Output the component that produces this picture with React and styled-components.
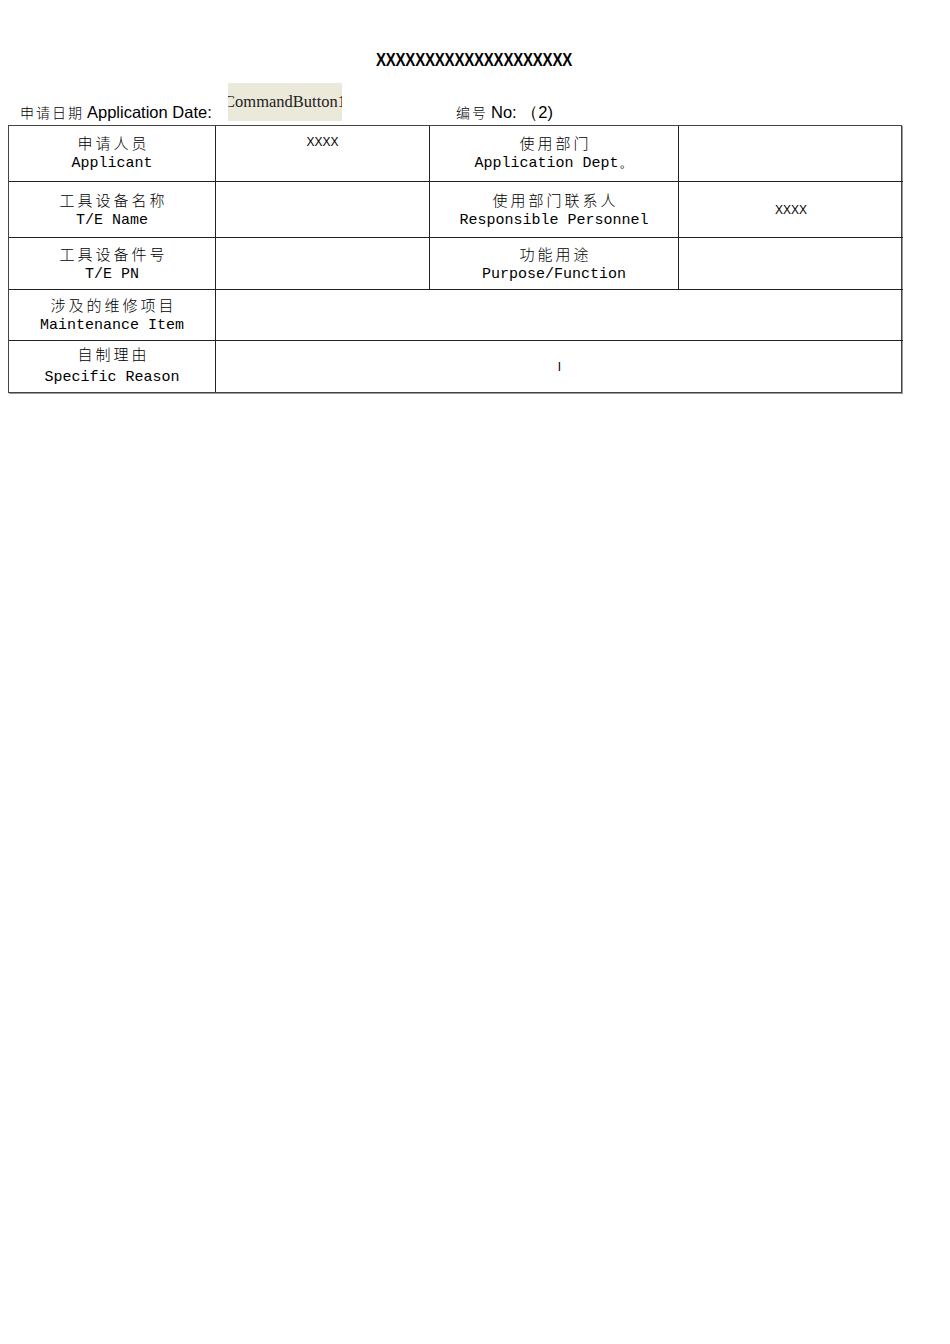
import React from "react";
import styled, { createGlobalStyle } from "styled-components";

const Global = createGlobalStyle`
  html, body { margin: 0; padding: 0; background: #fff; }
  body { font-family: "Liberation Sans", Arial, sans-serif; color: #000; }
`;

const Page = styled.div`
  width: 950px;
  min-height: 1344px;
  padding: 50px 0 0 8px;
  box-sizing: border-box;
`;

const Title = styled.h1`
  margin: 0;
  width: 932px;
  text-align: center;
  font-family: "Liberation Sans", Arial, sans-serif;
  font-weight: bold;
  font-size: 15px;
  line-height: 20px;
  letter-spacing: -0.2px;
`;

const TitleText = styled.span`
  display: inline-block;
  transform: scaleY(1.22);
`;

const HeaderRow = styled.div`
  display: flex;
  align-items: flex-end;
  height: 38px;
  margin-top: 13px;
  padding-left: 12px;
  margin-bottom: 4px;
`;

const Label = styled.span`
  font-size: 16.5px;
  line-height: 18px;
  white-space: nowrap;
  width: ${(p) => (p.$w ? `${p.$w}px` : "auto")};
  margin-left: ${(p) => p.$gap || 0}px;
`;

const Cjk = styled.span`
  font-family: "Noto Sans CJK SC", sans-serif;
  font-size: 14px;
  letter-spacing: 2px;
  font-weight: 300;
  margin-right: 3px;
`;

const CommandButton = styled.div`
  width: 114px;
  height: 38px;
  flex-shrink: 0;
  background: #ebe9da;
  display: flex;
  justify-content: center;
  padding-top: 10px;
  box-sizing: border-box;
  overflow: hidden;
  font-family: "Liberation Serif", "Times New Roman", serif;
  font-size: 16.5px;
  line-height: 17px;
  white-space: nowrap;
  color: #222;
`;

const Grid = styled.div`
  display: grid;
  width: 894px;
  grid-template-columns: 207px 214px 249px 224px;
  grid-template-rows: 56px 56px 52px 51px 51px;
  border: 1px solid #444;
  box-shadow: 1px 1px 0 #9a9a9a;
  box-sizing: border-box;
`;

const Cell = styled.div`
  border-right: ${(p) => (p.$last ? "none" : "1px solid #222")};
  border-bottom: ${(p) => (p.$bottom ? "none" : "1px solid #222")};
  grid-column: ${(p) => (p.$span ? `span ${p.$span}` : "auto")};
  display: flex;
  flex-direction: column;
  align-items: center;
  justify-content: ${(p) => (p.$middle ? "center" : "flex-start")};
  padding-top: ${(p) => (p.$middle ? 0 : p.$pt ?? 7)}px;
  box-sizing: border-box;
  font-family: "Liberation Mono", "Noto Sans CJK SC", monospace;
  font-size: 15px;
  text-align: center;
`;

const Zh = styled.div`
  font-family: "Noto Sans CJK SC", sans-serif;
  font-weight: 300;
  font-size: 15px;
  letter-spacing: 3px;
  line-height: 19px;
  padding-left: 3px;
`;

const En = styled.div`
  font-family: "Liberation Mono", monospace;
  font-size: 15px;
  line-height: 19px;
  margin-top: ${(p) => p.$mt ?? 2}px;
  white-space: pre;
`;

const Value = styled.div`
  font-family: "Liberation Sans", Arial, sans-serif;
  font-size: 12px;
  line-height: 18px;
  transform: scaleY(1.1);
`;

const LabelCell = ({ zh, en, last, bottom, pt, mt }) => (
  <Cell $last={last} $bottom={bottom} $pt={pt}>
    <Zh>{zh}</Zh>
    <En $mt={mt}>{en}</En>
  </Cell>
);

export default function App() {
  return (
    <>
      <Global />
      <Page>
        <Title>
          <TitleText>XXXXXXXXXXXXXXXXXXXX</TitleText>
        </Title>
        <HeaderRow>
          <Label $w={208}>
            <Cjk>申请日期</Cjk>Application Date:
          </Label>
          <CommandButton>CommandButton1</CommandButton>
          <Label $gap={114}>
            <Cjk>编号</Cjk>No: （2)
          </Label>
        </HeaderRow>
        <Grid>
          <LabelCell zh="申请人员" en="Applicant" />
          <Cell>
            <Value>XXXX</Value>
          </Cell>
          <LabelCell zh="使用部门" en="Application Dept。" />
          <Cell $last />

          <LabelCell zh="工具设备名称" en="T/E Name" pt={8} />
          <Cell />
          <LabelCell zh="使用部门联系人" en="Responsible Personnel" pt={8} />
          <Cell $last $middle>
            <Value>XXXX</Value>
          </Cell>

          <LabelCell zh="工具设备件号" en="T/E PN" pt={6} />
          <Cell />
          <LabelCell zh="功能用途" en="Purpose/Function" pt={6} />
          <Cell $last />

          <LabelCell zh="涉及的维修项目" en="Maintenance Item" pt={5} />
          <Cell $last $span={3} />

          <LabelCell zh="自制理由" en="Specific Reason" bottom pt={3} mt={5} />
          <Cell $last $bottom $span={3} $middle>
            <Value>I</Value>
          </Cell>
        </Grid>
      </Page>
    </>
  );
}
